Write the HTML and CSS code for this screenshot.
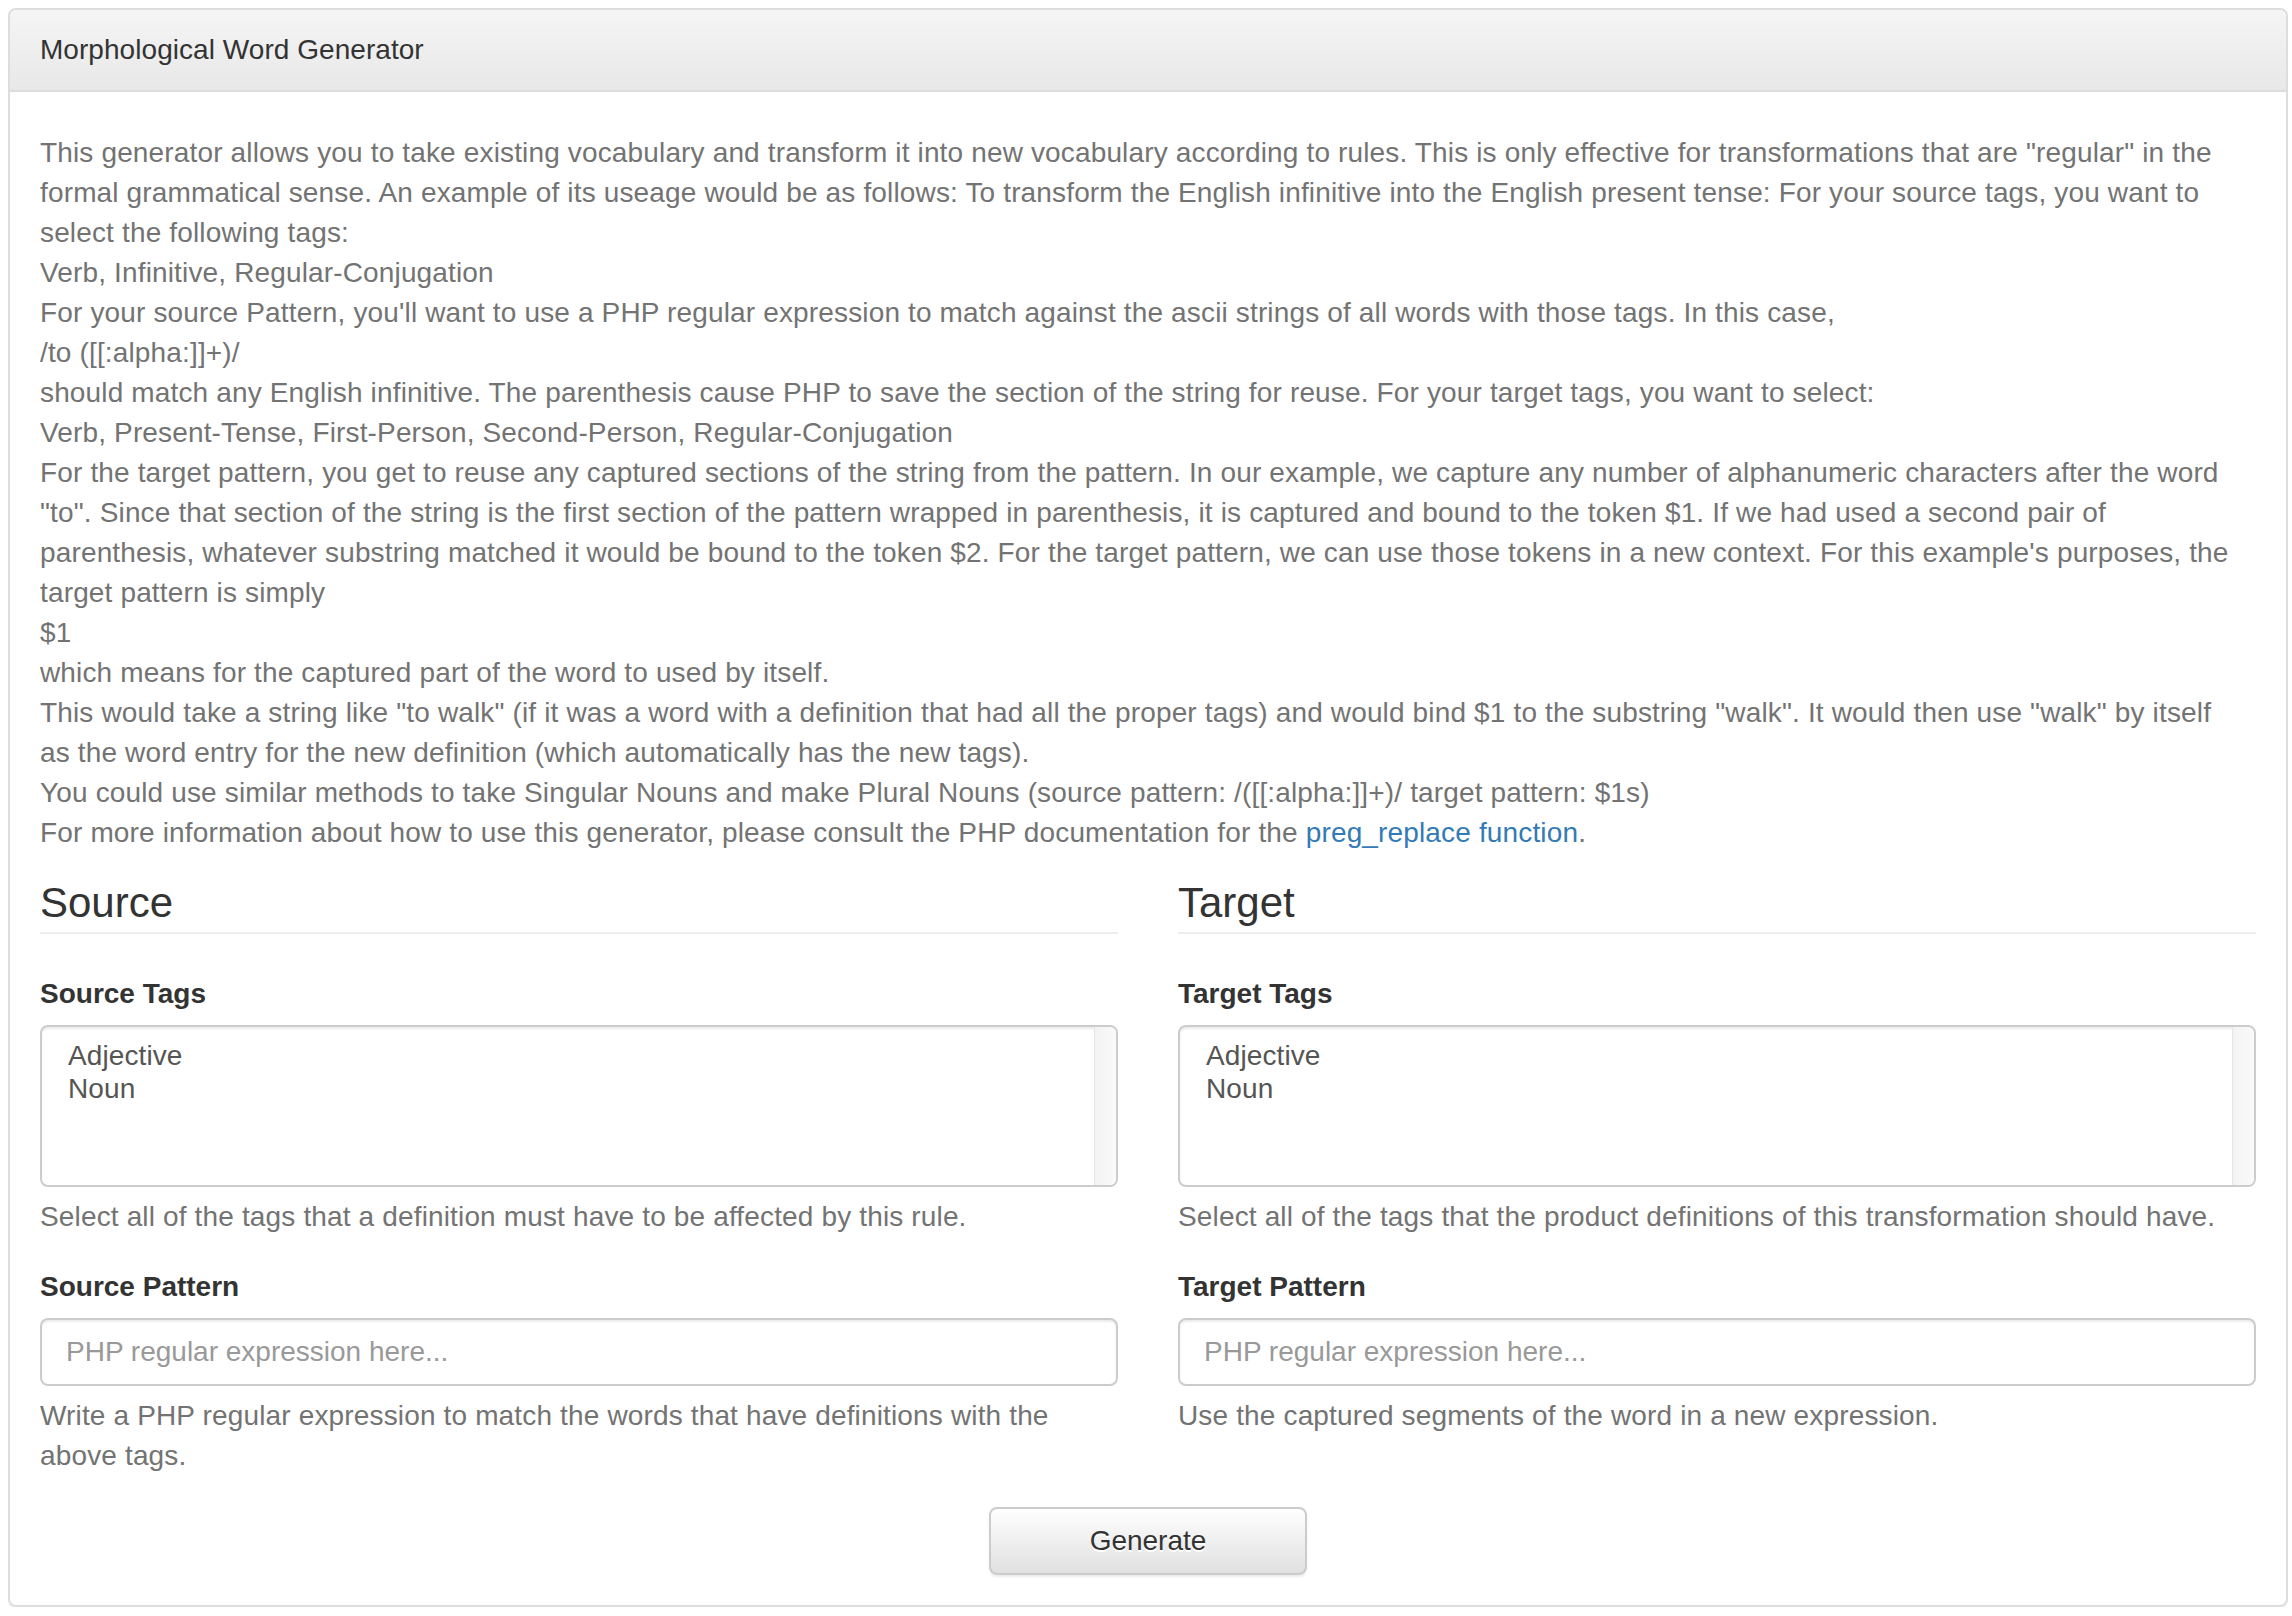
FILE: index.html
```html
<!DOCTYPE html>
<html lang="en">
<head>
<meta charset="utf-8">
<title>Morphological Word Generator</title>
<link rel="stylesheet" href="styles.css">
</head>
<body>
<div class="panel">
  <div class="panel-heading">Morphological Word Generator</div>
  <div class="panel-body">
    <p class="intro">This generator allows you to take existing vocabulary and transform it into new vocabulary according to rules. This is only effective for transformations that are "regular" in the formal grammatical sense. An example of its useage would be as follows: To transform the English infinitive into the English present tense: For your source tags, you want to select the following tags:<br>Verb, Infinitive, Regular-Conjugation<br>For your source Pattern, you'll want to use a PHP regular expression to match against the ascii strings of all words with those tags. In this case,<br>/to ([[:alpha:]]+)/<br>should match any English infinitive. The parenthesis cause PHP to save the section of the string for reuse. For your target tags, you want to select:<br>Verb, Present-Tense, First-Person, Second-Person, Regular-Conjugation<br>For the target pattern, you get to reuse any captured sections of the string from the pattern. In our example, we capture any number of alphanumeric characters after the word "to". Since that section of the string is the first section of the pattern wrapped in parenthesis, it is captured and bound to the token $1. If we had used a second pair of parenthesis, whatever substring matched it would be bound to the token $2. For the target pattern, we can use those tokens in a new context. For this example's purposes, the target pattern is simply<br>$1<br>which means for the captured part of the word to used by itself.<br>This would take a string like "to walk" (if it was a word with a definition that had all the proper tags) and would bind $1 to the substring "walk". It would then use "walk" by itself as&nbsp;the word entry for the new definition (which automatically has the new tags).<br>You could use similar methods to take Singular Nouns and make Plural Nouns (source pattern: /([[:alpha:]]+)/ target pattern: $1s)<br>For more information about how to use this generator, please consult the PHP documentation for the <a href="#">preg_replace function</a>.</p>

    <div class="columns">
      <section class="column">
        <h3 class="section-title">Source</h3>
        <div class="field">
          <label class="field-label">Source Tags</label>
          <div class="listbox" role="listbox">
            <div class="options">
              <div class="option">Adjective</div>
              <div class="option">Noun</div>
            </div>
            <div class="scroll-track"></div>
          </div>
          <p class="help">Select all of the tags that a definition must have to be affected by this rule.</p>
        </div>
        <div class="field">
          <label class="field-label">Source Pattern</label>
          <input class="text-input" type="text" placeholder="PHP regular expression here...">
          <p class="help">Write a PHP regular expression to match the words that have definitions with the above tags.</p>
        </div>
      </section>
      <section class="column">
        <h3 class="section-title">Target</h3>
        <div class="field">
          <label class="field-label">Target Tags</label>
          <div class="listbox" role="listbox">
            <div class="options">
              <div class="option">Adjective</div>
              <div class="option">Noun</div>
            </div>
            <div class="scroll-track"></div>
          </div>
          <p class="help">Select all of the tags that the product definitions of this transformation should have.</p>
        </div>
        <div class="field">
          <label class="field-label">Target Pattern</label>
          <input class="text-input" type="text" placeholder="PHP regular expression here...">
          <p class="help">Use the captured segments of the word in a new expression.</p>
        </div>
      </section>
    </div>

    <div class="actions">
      <button class="btn" type="button">Generate</button>
    </div>
  </div>
</div>
</body>
</html>
```

FILE: styles.css
```css
html, body {
  background: #fff;
}

body {
  margin: 8px 4px 0 8px;
  font-family: "Liberation Sans", Arial, Helvetica, sans-serif;
  font-size: 28px;
  line-height: 40px;
  color: #333;
}

.panel {
  border: 2px solid #ddd;
  border-radius: 8px;
  background: #fff;
  box-shadow: 0 2px 2px rgba(0, 0, 0, 0.05);
}

.panel-heading {
  padding: 20px 30px;
  background: linear-gradient(to bottom, #f5f5f5 0%, #e8e8e8 100%);
  border-bottom: 2px solid #ddd;
  border-radius: 6px 6px 0 0;
  color: #333;
  letter-spacing: 0.05px;
}

.panel-body {
  padding: 30px;
}

.intro {
  margin: 11px 0 0;
  color: #737373;
  letter-spacing: 0.15px;
}

.intro a {
  color: #337ab7;
  text-decoration: none;
}

.columns {
  display: grid;
  grid-template-columns: 1fr 1fr;
  column-gap: 60px;
}

.section-title {
  margin: 27px 0 40px;
  padding-bottom: 6px;
  border-bottom: 2px solid #eee;
  font-size: 42px;
  line-height: 46px;
  font-weight: normal;
  color: #333;
}

.field {
  margin-top: 30px;
}

.section-title + .field {
  margin-top: 40px;
}

.field-label {
  display: block;
  margin-bottom: 11px;
  font-weight: bold;
  color: #333;
}

.listbox {
  display: flex;
  height: 162px;
  box-sizing: border-box;
  border: 2px solid #ccc;
  border-radius: 8px;
  box-shadow: inset 0 2px 2px rgba(0, 0, 0, 0.075);
  overflow: hidden;
  background: #fff;
}

.options {
  flex: 1;
  padding: 12px 24px;
  color: #555;
}

.option {
  padding: 0 2px;
  line-height: 33px;
  letter-spacing: 0.1px;
}

.scroll-track {
  width: 21px;
  border-left: 1px solid #e6e6e6;
  background: linear-gradient(to right, #f3f3f3, #fafafa);
}

.help {
  margin: 10px 0 0;
  color: #737373;
  letter-spacing: 0.15px;
}

.text-input {
  display: block;
  width: 100%;
  height: 68px;
  box-sizing: border-box;
  margin: 0;
  padding: 12px 24px;
  border: 2px solid #ccc;
  border-radius: 8px;
  box-shadow: inset 0 2px 2px rgba(0, 0, 0, 0.075);
  font: inherit;
  color: #555;
  background: #fff;
}

.text-input::placeholder {
  color: #999;
}

.actions {
  display: flex;
  justify-content: center;
  margin-top: 31px;
}

.btn {
  width: 318px;
  height: 68px;
  box-sizing: border-box;
  padding: 12px 24px;
  border: 2px solid #ccc;
  border-radius: 8px;
  background: linear-gradient(to bottom, #fff 0%, #e0e0e0 100%);
  box-shadow: inset 0 2px 0 rgba(255, 255, 255, 0.15), 0 2px 2px rgba(0, 0, 0, 0.075);
  font: inherit;
  color: #333;
  text-shadow: 0 2px 0 #fff;
  cursor: pointer;
}
```
